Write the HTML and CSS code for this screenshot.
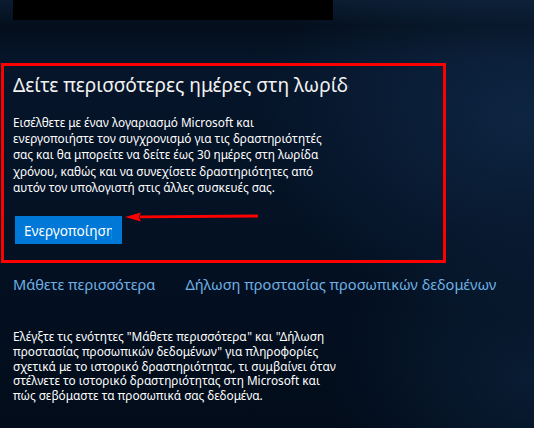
FILE: index.html
```html
<!DOCTYPE html>
<html lang="el">
<head>
<meta charset="utf-8">
<link rel="stylesheet" href="styles.css">
</head>
<body>
<div class="page">
  <div class="topbar"></div>
  <section class="card">
    <h1 class="title">Δείτε περισσότερες ημέρες στη λωρίδα χρόνου</h1>
    <p class="desc">Εισέλθετε με έναν λογαριασμό Microsoft και<br>ενεργοποιήστε τον συγχρονισμό για τις δραστηριότητές<br>σας και θα μπορείτε να δείτε έως 30 ημέρες στη λωρίδα<br>χρόνου, καθώς και να συνεχίσετε δραστηριότητες από<br>αυτόν τον υπολογιστή στις άλλες συσκευές σας.</p>
    <div class="actions">
      <button class="btn"><span class="btn-label">Ενεργοποίηση</span></button>
    </div>
    <svg class="arrow" width="140" height="14" viewBox="0 0 140 14">
      <path d="M16 5.6 L134 4.6 L134 7.6 L16 8.2 Z" fill="#ff0000"/>
      <path d="M1 7 L17 2.5 L15 7 L17 11.5 Z" fill="#ff0000"/>
    </svg>
  </section>
  <nav class="links">
    <a class="link" href="#">Μάθετε περισσότερα</a>
    <a class="link" href="#">Δήλωση προστασίας προσωπικών δεδομένων</a>
  </nav>
  <p class="note">Ελέγξτε τις ενότητες "Μάθετε περισσότερα" και "Δήλωση<br>προστασίας προσωπικών δεδομένων" για πληροφορίες<br>σχετικά με το ιστορικό δραστηριότητας, τι συμβαίνει όταν<br>στέλνετε το ιστορικό δραστηριότητας στη Microsoft και<br>πώς σεβόμαστε τα προσωπικά σας δεδομένα.</p>
</div>
</body>
</html>
```
FILE: styles.css
```css
html, body {
  margin: 0;
  padding: 0;
}
body {
  width: 534px;
  height: 428px;
  overflow: hidden;
  font-family: "Noto Sans", "Open Sans", sans-serif;
  color: #ffffff;
  background:
    radial-gradient(ellipse 260px 200px at 520px 120px, rgba(20, 50, 85, 0.55), rgba(20, 50, 85, 0) 100%),
    radial-gradient(ellipse 200px 160px at 530px 380px, rgba(14, 38, 66, 0.6), rgba(14, 38, 66, 0) 100%),
    linear-gradient(180deg, #0a1c30 0px, #081729 10px, #040e1b 26px, #06152a 60px, #041123 250px, #020c1a 428px);
}
.page {
  display: flex;
  flex-direction: column;
}
.topbar {
  margin-left: 13px;
  width: 320px;
  height: 20px;
  background: #000000;
}
.card {
  position: relative;
  margin: 43px 0 0 1px;
  height: 194px;
  border: 3px solid #ff0000;
  padding: 0 0 0 9px;
  box-sizing: content-box;
  width: 430px;
}
.title {
  margin: 5px 0 0 0;
  width: 336px;
  overflow: hidden;
  white-space: nowrap;
  font-size: 19.2px;
  font-weight: 400;
  line-height: 28px;
  color: #f2f2f2;
}
.desc {
  margin: 15px 0 0 0;
  width: 340px;
  font-size: 11.8px;
  line-height: 16.2px;
  color: #ffffff;
}
.actions {
  margin-top: 21px;
  display: flex;
}
.btn {
  margin-left: 2px;
  width: 107px;
  height: 28px;
  padding: 0 0 0 9px;
  border: 0;
  background: #0078d7;
  color: #ffffff;
  font-family: "Noto Sans", "Open Sans", sans-serif;
  font-size: 13.6px;
  text-align: left;
  display: flex;
  align-items: center;
}
.btn-label {
  display: block;
  width: 88px;
  overflow: hidden;
  white-space: nowrap;
}
.arrow {
  position: absolute;
  left: 120px;
  top: 144px;
}
.links {
  margin: 10px 0 0 13px;
  display: flex;
  gap: 30px;
}
.link {
  font-size: 14.6px;
  line-height: 22px;
  color: #6fb0e4;
  text-decoration: none;
}
.note {
  margin: 34px 0 0 13px;
  width: 340px;
  font-size: 11.8px;
  line-height: 14.8px;
  color: #ffffff;
}
```
